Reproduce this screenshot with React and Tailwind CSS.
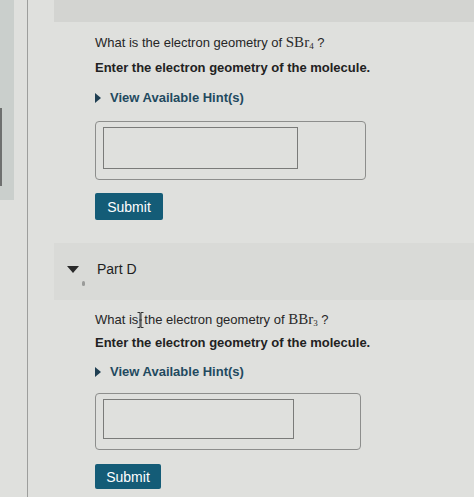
const sans = { fontFamily: '"Liberation Sans", Arial, sans-serif' };

function Formula({ base, sub }) {
  return (
    <span className="font-['Liberation_Serif',serif] text-[15px] text-[#2b2b2b]">
      {base}
      <span className="text-[9px] relative top-[2px]">{sub}</span>
    </span>
  );
}

function Caret({ dir = "right" }) {
  if (dir === "down") {
    return (
      <svg width="12" height="7" viewBox="0 0 12 7" className="shrink-0">
        <path d="M0 0h12L6 7z" fill="#2a2a2a" />
      </svg>
    );
  }
  return (
    <svg width="6" height="10" viewBox="0 0 6 10" className="shrink-0">
      <path d="M0 0l6 5-6 5z" fill="#1f3f52" />
    </svg>
  );
}

function Question({ base, sub, cursor, boxW, innerW, btnW, gaps }) {
  return (
    <div className="flex flex-col pl-[67px]">
      <p className="h-[20px] leading-[20px] text-[13px] text-[#262626] whitespace-nowrap">
        What is
        {cursor ? (
          <span className="relative inline-block w-[6px]">
            <svg width="7" height="16" viewBox="0 0 7 16" className="absolute left-[-1px] top-[-12px]">
              <path d="M0.5 0.5h2.5v15H0.5M6.5 0.5H4v15h2.5M2 8h3" stroke="#333" strokeWidth="1" fill="none" />
            </svg>
          </span>
        ) : (
          " "
        )}
        the electron geometry of <Formula base={base} sub={sub} /> ?
      </p>
      <p className={`${gaps.enter} h-[20px] leading-[20px] text-[13px] font-bold text-[#222] whitespace-nowrap`}>
        Enter the electron geometry of the molecule.
      </p>
      <div className={`${gaps.hint} h-[20px] flex items-center gap-[9px]`}>
        <Caret />
        <span className="text-[13px] font-bold text-[#1f4a5f] leading-[20px]">View Available Hint(s)</span>
      </div>
      <div
        className={`${gaps.box} ${boxW} ${gaps.boxH} rounded-[4px] border border-[#8d8e8c] pl-[7px] pt-[5px]`}
      >
        <div className={`${innerW} ${gaps.innerH} border border-[#7a7b79] bg-[#dfe0dd]`} />
      </div>
      <button
        className={`${gaps.btn} ${btnW} ${gaps.btnH} rounded-[2px] bg-[#145c77] text-white text-[14px] leading-none flex items-center justify-center`}
      >
        Submit
      </button>
    </div>
  );
}

export default function App() {
  return (
    <div style={sans} className="relative w-[474px] h-[497px] overflow-hidden bg-[#dfe0dd] flex">
      {/* left rail */}
      <div className="w-[28px] shrink-0 border-r border-[#9d9e9c] flex">
        <div className="w-[14px] h-[200px] bg-[#cacfcc] flex items-start">
          <div className="mt-[108px] w-[2px] h-[78px] bg-[#6e706f]" />
        </div>
      </div>

      <div className="flex-1 flex flex-col">
        <div className="ml-[26px] h-[22px] bg-[#d3d4d1]" />
        <div className="mt-[10px]">
          <Question
            base="SBr"
            sub="4"
            boxW="w-[271px]"
            innerW="w-[195px]"
            btnW="w-[68px]"
            gaps={{
              enter: "mt-[6px]",
              hint: "mt-[10px]",
              box: "mt-[13px]",
              boxH: "h-[59px]",
              innerH: "h-[42px]",
              btn: "mt-[13px]",
              btnH: "h-[27px]",
            }}
          />
        </div>

        {/* Part D header */}
        <div className="mt-[23px] ml-[26px] h-[57px] bg-[#d9dad7] relative flex items-center">
          <div className="ml-[13px] mb-[4px]">
            <Caret dir="down" />
          </div>
          <span className="ml-[18px] mb-[4px] text-[14px] text-[#1e1e1e]">Part D</span>
          <span className="absolute left-[28px] top-[38px] w-[3px] h-[5px] rounded-full bg-[#9a9b99]" />
        </div>

        <div className="mt-[9px]">
          <Question
            base="BBr"
            sub="3"
            cursor
            boxW="w-[266px]"
            innerW="w-[191px]"
            btnW="w-[66px]"
            gaps={{
              enter: "mt-[4px]",
              hint: "mt-[9px]",
              box: "mt-[11px]",
              boxH: "h-[57px]",
              innerH: "h-[40px]",
              btn: "mt-[14px]",
              btnH: "h-[25px]",
            }}
          />
        </div>
      </div>
    </div>
  );
}
